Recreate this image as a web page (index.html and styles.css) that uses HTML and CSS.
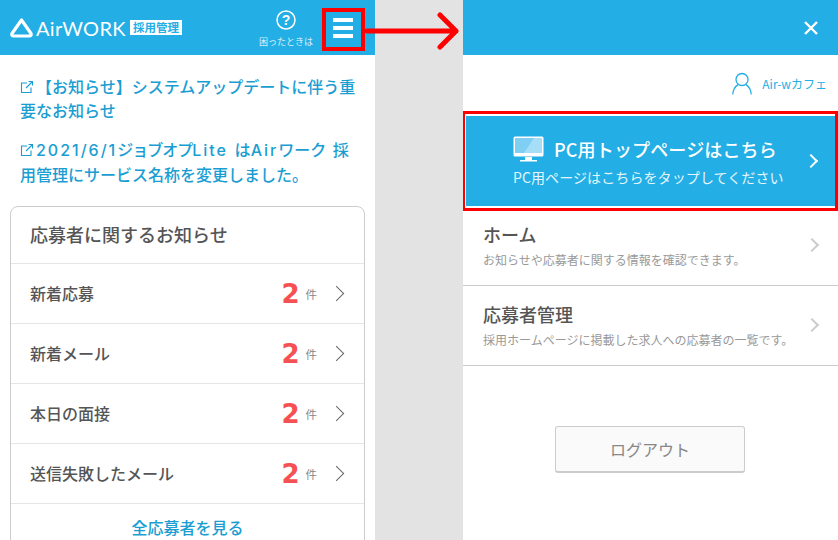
FILE: index.html
```html
<!doctype html>
<html lang="ja">
  <head>
    <title>AirWORK 採用管理</title>
    <meta charset="utf-8">
    <link rel="stylesheet" href="styles.css">
  </head>
  <body>
    <div class="pg-stage">
      <section class="sp-screen">
        <header class="sp-header">
          <div class="sp-logo">
            <svg class="sp-logo-mark" width="23" height="20" viewBox="0 0 23 20"><path d="M11.5 2 L2 15.5 Q1.2 18 3.8 18 L19.2 18 Q21.8 18 21 15.5 Z" fill="none" stroke="#fff" stroke-width="3.2" stroke-linejoin="round"/></svg>
            <span class="sp-logo-text">AirWORK</span>
            <span class="sp-logo-tag">採用管理</span>
          </div>
          <div class="sp-help">
            <svg width="20" height="20" viewBox="0 0 20 20"><circle cx="10" cy="10" r="9" fill="none" stroke="#fff" stroke-width="1.5"/><text x="10" y="15" text-anchor="middle" class="sp-help-mark">?</text></svg>
            <span class="sp-help-label">困ったときは</span>
          </div>
          <div class="sp-menu"><i></i><i></i><i></i></div>
        </header>
        <div class="nt-list">
          <a class="nt-link"><svg class="nt-ext" width="14" height="14" viewBox="0 0 14 14"><path d="M7 3 H1.5 V12.5 H11 V7.5 M6 8 L12.5 1.5 M8.5 1.5 H12.5 V5.5" fill="none" stroke="#1a9ed2" stroke-width="1.1"/></svg>【お知らせ】システムアップデートに伴う重要なお知らせ</a>
          <a class="nt-link"><svg class="nt-ext" width="14" height="14" viewBox="0 0 14 14"><path d="M7 3 H1.5 V12.5 H11 V7.5 M6 8 L12.5 1.5 M8.5 1.5 H12.5 V5.5" fill="none" stroke="#1a9ed2" stroke-width="1.1"/></svg><span class="nt-latin">2021/6/1</span><span class="nt-tight">ジョブオプ</span><span class="nt-latin">Lite</span><span> は</span><span class="nt-latin">Air</span><span>ワーク 採</span><br><span>用管理にサービス名称を変更しました。</span></a>
        </div>
        <div class="ap-card">
          <h2 class="ap-title">応募者に関するお知らせ</h2>
          <div class="ap-row"><span class="ap-label">新着応募</span><span class="ap-count">2</span><span class="ap-unit">件</span><span class="ap-chevron"></span></div>
          <div class="ap-row"><span class="ap-label">新着メール</span><span class="ap-count">2</span><span class="ap-unit">件</span><span class="ap-chevron"></span></div>
          <div class="ap-row"><span class="ap-label">本日の面接</span><span class="ap-count">2</span><span class="ap-unit">件</span><span class="ap-chevron"></span></div>
          <div class="ap-row"><span class="ap-label">送信失敗したメール</span><span class="ap-count">2</span><span class="ap-unit">件</span><span class="ap-chevron"></span></div>
          <a class="ap-all">全応募者を見る</a>
        </div>
      </section>
      <div class="pg-gutter"></div>
      <section class="sp-screen">
        <header class="sp-header sp-header-close">
          <svg width="16" height="16" viewBox="0 0 16 16"><path d="M2 2 L14 14 M14 2 L2 14" stroke="#fff" stroke-width="2.4"/></svg>
        </header>
        <div class="mn-user">
          <svg width="20" height="23" viewBox="0 0 20 23"><circle cx="10" cy="7.5" r="6" fill="none" stroke="#23aee5" stroke-width="1.3"/><path d="M0.8 22.5 C1 17 3.8 14 6.2 12.6 M19.2 22.5 C19 17 16.2 14 13.8 12.6" fill="none" stroke="#23aee5" stroke-width="1.3"/></svg>
          <span>Air-wカフェ</span>
        </div>
        <a class="mn-pc">
          <div class="mn-pc-head">
            <svg width="31" height="26" viewBox="0 0 31 26"><rect x="0.5" y="0.5" width="30" height="20" rx="1.5" fill="#fff"/><rect x="2" y="2" width="27" height="15" fill="#7fcff2"/><path d="M11 17 L21 2 L29 2 L29 17 Z" fill="#a5def6"/><rect x="12" y="21" width="7" height="3" fill="#fff"/><rect x="7" y="24" width="17" height="1.5" fill="#fff"/></svg>
            <span>PC用トップページはこちら</span>
          </div>
          <div class="mn-pc-sub">PC用ページはこちらをタップしてください</div>
          <span class="mn-chevron mn-chevron-white"></span>
        </a>
        <a class="mn-item">
          <div class="mn-item-title">ホーム</div>
          <div class="mn-item-sub">お知らせや応募者に関する情報を確認できます。</div>
          <span class="mn-chevron"></span>
        </a>
        <a class="mn-item">
          <div class="mn-item-title">応募者管理</div>
          <div class="mn-item-sub">採用ホームページに掲載した求人への応募者の一覧です。</div>
          <span class="mn-chevron"></span>
        </a>
        <div class="mn-logout"><button class="mn-logout-btn">ログアウト</button></div>
      </section>
      <div class="an-box an-box-menu"></div>
      <div class="an-box an-box-pc"></div>
      <svg class="an-arrow" width="100" height="40" viewBox="0 0 100 40"><path d="M2 20 H91 M75 4 L91 20 L75 36" fill="none" stroke="#f00" stroke-width="5" stroke-linecap="round" stroke-linejoin="round"/></svg>
    </div>
  </body>
</html>
```

FILE: styles.css
```css
html,
body {
  margin: 0;
  padding: 0;
  background: #fff;
}
body {
  font-family: "Noto Sans CJK JP", "Noto Sans", sans-serif;
  color: #555;
}
.pg-stage {
  position: relative;
  display: flex;
  width: 838px;
  height: 540px;
  overflow: hidden;
}
.pg-gutter {
  width: 88px;
  background: #e3e3e3;
}
.sp-screen {
  width: 375px;
  flex: none;
}
.sp-header {
  display: flex;
  align-items: center;
  height: 55px;
  background: #23aee5;
  color: #fff;
}
.sp-header-close {
  justify-content: flex-end;
  padding-right: 19px;
}
.sp-logo {
  display: flex;
  align-items: center;
  padding-left: 10px;
  width: 249px;
}
.sp-logo-mark {
  margin-right: 3px;
}
.sp-logo-text {
  font-family: "Lato", sans-serif;
  font-size: 20px;
  letter-spacing: 0.3px;
  width: 94px;
}
.sp-logo-tag {
  background: #fff;
  color: #23aee5;
  font-size: 11.5px;
  font-weight: 700;
  line-height: 15px;
  width: 52px;
  text-align: center;
  white-space: nowrap;
}
.sp-help {
  display: flex;
  flex-direction: column;
  align-items: center;
  width: 54px;
  padding-top: 2px;
}
.sp-help-mark {
  font-family: "Liberation Sans", sans-serif;
  font-size: 14px;
  font-weight: 700;
  fill: #fff;
}
.sp-help-label {
  font-size: 9px;
  line-height: 13px;
  margin-top: 5px;
  white-space: nowrap;
  color: #d8f0fb;
}
.sp-menu {
  display: flex;
  flex-direction: column;
  gap: 4px;
  margin: 1px 0 0 20px;
}
.sp-menu i {
  display: block;
  width: 20px;
  height: 4px;
  background: #fff;
}
.nt-list {
  padding: 19px 17px 0 20px;
}
.nt-link {
  display: block;
  color: #1a9ed2;
  font-size: 16px;
  font-weight: 500;
  line-height: 24px;
  word-spacing: 3px;
  margin-bottom: 15px;
}
.nt-ext {
  vertical-align: -1px;
  margin-right: 2px;
}
.nt-latin {
  font-family: "Inter", sans-serif;
  letter-spacing: 2px;
}
.nt-tight {
  letter-spacing: -1px;
}
.ap-card {
  margin: 20px 10px 0;
  border: 1px solid #ccc;
  border-radius: 8px;
  background: #fff;
}
.ap-title {
  margin: 0;
  padding: 0 19px;
  height: 56px;
  line-height: 54px;
  font-size: 18px;
  font-weight: 500;
  color: #555;
}
.ap-row {
  display: flex;
  align-items: center;
  height: 59px;
  padding: 0 19px;
  border-top: 1px solid #e6e6e6;
}
.ap-label {
  flex: 1;
  font-size: 16px;
  font-weight: 500;
  color: #555;
  padding-bottom: 2px;
}
.ap-count {
  font-family: "DejaVu Sans", sans-serif;
  font-size: 26px;
  font-weight: 700;
  line-height: 1;
  color: #f55152;
}
.ap-unit {
  font-size: 11.5px;
  color: #888;
  margin-left: 6px;
  margin-right: 14px;
}
.ap-chevron {
  box-sizing: border-box;
  width: 11px;
  height: 11px;
  border-top: 1.5px solid #666;
  border-right: 1.5px solid #666;
  transform: rotate(45deg);
  margin: 0 3px 0 0;
}
.ap-all {
  display: block;
  border-top: 1px solid #e6e6e6;
  text-align: center;
  color: #1a9ed2;
  font-size: 16px;
  font-weight: 500;
  line-height: 46px;
}
.mn-user {
  display: flex;
  align-items: center;
  justify-content: flex-end;
  height: 56px;
  padding-right: 11px;
  color: #23aee5;
  font-size: 12px;
}
.mn-user span {
  margin-left: 10px;
}
.mn-pc {
  position: relative;
  display: block;
  box-sizing: border-box;
  height: 90px;
  margin: 5px 3px 1px;
  background: #23aee5;
  color: #fff;
  padding: 20px 0 0 47px;
}
.mn-pc-head {
  display: flex;
  align-items: center;
  font-size: 18px;
  letter-spacing: 0.15px;
  font-weight: 500;
  line-height: 26px;
}
.mn-pc-head span {
  margin-left: 10px;
}
.mn-pc-sub {
  font-size: 14px;
  letter-spacing: 0.1px;
  line-height: 20px;
  margin-top: 5px;
  color: #e4f5fc;
}
.mn-chevron {
  position: absolute;
  right: 21px;
  top: 50%;
  width: 8px;
  height: 8px;
  margin-top: -6px;
  border-top: 2.5px solid #ccc;
  border-right: 2.5px solid #ccc;
  transform: rotate(45deg);
}
.mn-chevron-white {
  right: 19px;
  margin-top: -5px;
  border-color: #fff;
}
.mn-item {
  position: relative;
  display: block;
  box-sizing: border-box;
  height: 80px;
  padding: 15px 20px 0;
  border-bottom: 1px solid #ccc;
}
.mn-pc + .mn-item {
  height: 79px;
  padding-top: 14px;
}
.mn-item-title {
  font-size: 18px;
  font-weight: 500;
  line-height: 26px;
  color: #555;
}
.mn-item-sub {
  font-size: 12px;
  line-height: 18px;
  margin-top: 4px;
  color: #999;
}
.mn-logout {
  display: flex;
  justify-content: center;
  padding: 60px 1px 0 0;
}
.mn-logout-btn {
  width: 190px;
  height: 47px;
  border: 1px solid #ccc;
  border-bottom-width: 2px;
  border-radius: 3px;
  background: #fafafa;
  color: #888;
  font-family: inherit;
  font-size: 16px;
}
.an-box {
  position: absolute;
  box-sizing: border-box;
  border: 3px solid #f00;
}
.an-box-menu {
  left: 322px;
  top: 8px;
  width: 43px;
  height: 43px;
  border-width: 4px;
}
.an-box-pc {
  left: 463px;
  top: 111px;
  width: 375px;
  height: 100px;
  border-left-width: 2px;
}
.an-arrow {
  position: absolute;
  left: 365px;
  top: 11px;
}
```
